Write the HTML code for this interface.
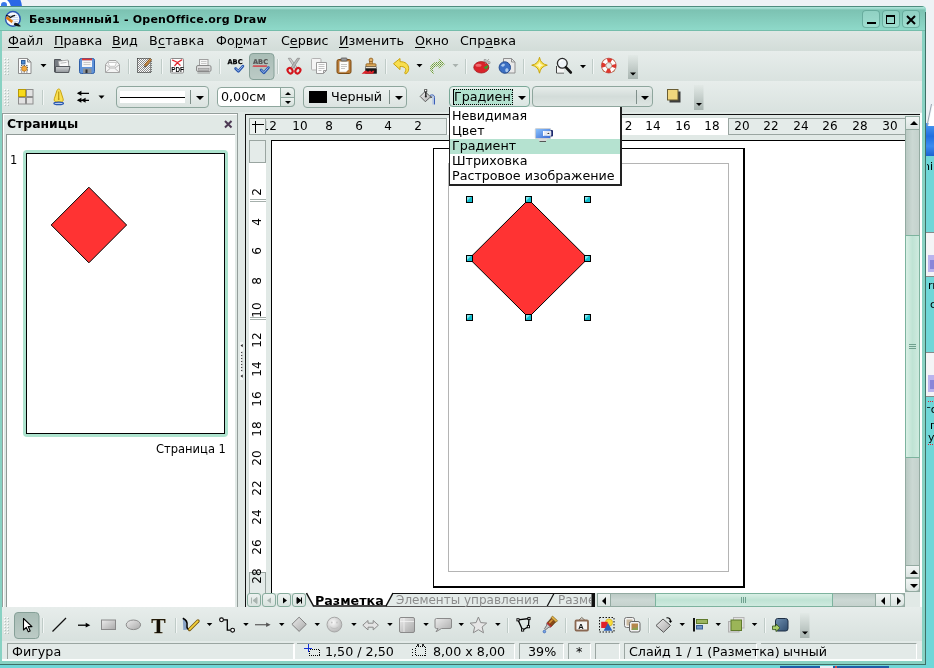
<!DOCTYPE html>
<html lang="ru">
<head>
<meta charset="utf-8">
<title>Безымянный1 - OpenOffice.org Draw</title>
<style>
html,body{margin:0;padding:0;}
body{width:934px;height:668px;overflow:hidden;position:relative;background:#6fd7d8;font-family:"DejaVu Sans","Liberation Sans",sans-serif;font-size:12.7px;color:#000;}
.a{position:absolute;}
svg{will-change:transform;}
.t{position:absolute;white-space:pre;line-height:16px;will-change:transform;}
u{text-decoration:underline;text-underline-offset:2px;text-decoration-thickness:1px;}
#desk-top{left:0;top:0;width:934px;height:7px;background:#eef2f5;}
#desk-right{left:900px;top:0;width:34px;height:123px;background:#eef2f5;}
#win{left:0;top:6px;width:926px;height:659px;background:#88d2c3;border-radius:0 4px 0 0;}
#title{left:0;top:6px;width:925px;height:25px;border-radius:0 4px 0 0;background:linear-gradient(#4f8c7f 0,#4f8c7f 1px,#a9e2d6 1px,#a9e2d6 2px,#7cc2b2 4px,#8ed9c9 24px,#74bdab 24px,#74bdab 25px);}
#content{left:2px;top:31px;width:920px;height:630px;background:#e1e9e6;}
#menubar{left:2px;top:31px;width:920px;height:20px;background:linear-gradient(#dfe7e4,#d2dcd8);}
.tb{left:2px;width:920px;background:linear-gradient(#e7edeb,#d9e2df);}
.wb{top:10px;width:18px;height:18px;border-radius:4px;background:linear-gradient(#8fd0c2,#a0dfd1);box-shadow:inset 0 0 0 1px rgba(70,140,125,.55);}
.cb{box-sizing:border-box;border:1px solid #8ea69d;border-radius:4px;background:linear-gradient(#eef2f1,#dbe3e0);}
.cbs{top:3px;width:1px;height:14px;background:#7f8f8a;}
.arr{width:0;height:0;border-style:solid;border-width:4px 4px 0 4px;border-color:#000 transparent transparent transparent;}
.arrs{width:0;height:0;border-style:solid;}
.rn{font-size:12px;line-height:17px;text-align:center;}
.vr{transform:rotate(-90deg);transform-origin:50% 50%;line-height:16px;}
.sbb{box-sizing:border-box;border:1px solid #93aaa1;background:linear-gradient(#f1f5f4,#dbe4e1);}
.nb{top:593px;width:14px;height:14px;box-sizing:border-box;border:1px solid #86ab9c;border-radius:3px;background:linear-gradient(#edf2f0,#d9e3df);line-height:0;}
.sf{top:643px;height:16px;box-sizing:border-box;border-top:1px solid #9aa5a1;border-left:1px solid #9aa5a1;border-right:1px solid #fff;}
.st{top:644px;line-height:16px;}
</style>
</head>
<body>
<div class="a" id="desk-top"></div>
<div class="a" id="desk-right"></div>
<div class="a" id="win"></div>
<div class="a" id="title"></div>
<div class="a" id="content"></div>
<div class="a" id="menubar"></div>
<div class="a tb" style="top:51px;height:30px"></div>
<div class="a tb" style="top:81px;height:31px"></div>
<div class="a" style="left:0;top:0;width:24px;height:6px;overflow:hidden"><div class="a" style="left:-20px;top:-13px;width:42px;height:42px;border-radius:50%;border:11px solid #2b68e6;background:#fff;box-sizing:border-box"></div><div class="a" style="left:1px;top:2px;width:6px;height:6px;border-radius:50%;background:#3a78ea"></div></div>
<svg class="a" style="left:4px;top:10px" width="18" height="18" viewBox="0 0 18 18"><circle cx="8.900" cy="8.900" r="7.300" fill="#f6f9fd" stroke="#2a57b4" stroke-width="1.500"/><path d="M5 7.500h9M7 9.500h7.500M9 11.500h5M5 5.500h8" stroke="#c9d8ee" stroke-width="1"/><path d="M2 5.300q2.600.2 4.500 2.200q2-1.900 4.600-2.200" fill="none" stroke="#111" stroke-width="1.200"/><path d="M2.300 7.300l6.300 4.800" stroke="#e07a10" stroke-width="2.700"/><path d="M8.400 11.900l2.300 1.700" stroke="#ececec" stroke-width="2.600"/><path d="M10.600 12.800q2.600-.4 6.400 3.400q-4.400.8-7.200-1.400z" fill="#151515"/></svg>
<div class="t" style="left:29px;top:11px;font-size:11px;font-weight:bold;letter-spacing:.2px;line-height:18px">Безымянный1 - OpenOffice.org Draw</div>
<div class="a wb" style="left:862px"><div class="a" style="left:4.500px;top:11.500px;width:9px;height:2px;background:#000"></div></div>
<div class="a wb" style="left:882px"><div class="a" style="left:4px;top:5px;width:9px;height:9px;box-sizing:border-box;border:1px solid #000;border-top-width:2px"></div></div>
<div class="a wb" style="left:902px"><svg class="a" style="left:3.500px;top:4.500px" width="10" height="10" viewBox="0 0 10 10"><path d="M1 1l8 8M9 1l-8 8" stroke="#000" stroke-width="2"/></svg></div>

<div class="t" style="left:8px;top:33px"><u>Ф</u>айл</div>
<div class="t" style="left:54px;top:33px"><u>П</u>равка</div>
<div class="t" style="left:112px;top:33px"><u>В</u>ид</div>
<div class="t" style="left:149px;top:33px;letter-spacing:.25px">В<u>с</u>тавка</div>
<div class="t" style="left:216px;top:33px">Фо<u>р</u>мат</div>
<div class="t" style="left:280.5px;top:33px">С<u>е</u>рвис</div>
<div class="t" style="left:338.5px;top:33px"><u>И</u>зменить</div>
<div class="t" style="left:414.5px;top:33px"><u>О</u>кно</div>
<div class="t" style="left:459.5px;top:33px">Спр<u>а</u>вка</div>

<!--TB1S-->
<svg class="a" style="left:0;top:51px" width="934" height="30" viewBox="0 51 934 30" shape-rendering="auto">
<defs>
<pattern id="chk" width="2" height="2" patternUnits="userSpaceOnUse"><rect width="2" height="2" fill="#fdfdfd"/><rect width="1" height="1" fill="#8a8a8a"/><rect x="1" y="1" width="1" height="1" fill="#8a8a8a"/></pattern>
<pattern id="gdot" width="2" height="2" patternUnits="userSpaceOnUse"><rect width="1" height="1" fill="#6f9a3a"/><rect x="1" y="1" width="1" height="1" fill="#8db457"/></pattern>
<pattern id="grip" x="4" y="58" width="3" height="3" patternUnits="userSpaceOnUse"><rect x="0" y="0" width="1" height="1" fill="#fff"/><rect x="1" y="1" width="1" height="1" fill="#b4c1bd"/></pattern>
<linearGradient id="gfold" x1="0" y1="0" x2="0" y2="1"><stop offset="0" stop-color="#d2d4d6"/><stop offset="1" stop-color="#8f9498"/></linearGradient>
<linearGradient id="gend" x1="0" y1="0" x2="0" y2="1"><stop offset="0" stop-color="#e2e9e6"/><stop offset="1" stop-color="#a9b5b1"/></linearGradient>
<linearGradient id="gpress" x1="0" y1="0" x2="0" y2="1"><stop offset="0" stop-color="#a9bdb6"/><stop offset="1" stop-color="#bccbc6"/></linearGradient>
<g id="sep"><rect x="0" y="59" width="1" height="15" fill="#bfcbc7"/><rect x="1" y="59" width="1" height="15" fill="#f2f6f5"/></g>
<path id="dd" d="M0 0h6l-3 3.200z"/>
</defs>
<rect x="4" y="58" width="6" height="17" fill="url(#grip)"/>
<!-- new doc -->
<path d="M18.500 58.500h9l3.500 3.500v11.500h-12.500z" fill="#fcfcfc" stroke="#8d8d8d"/>
<path d="M27.500 58.500v3.500h3.500z" fill="#dedede" stroke="#8d8d8d" stroke-linejoin="round"/>
<rect x="21.500" y="60.500" width="3.500" height="3.500" fill="#4f8bd0" stroke="#2c5c9c"/>
<circle cx="24.300" cy="68.600" r="2.600" fill="#f3a73c" stroke="#c47a12" stroke-width=".8"/>
<rect x="21" y="65.500" width="6.500" height="6.500" fill="none" stroke="#333" stroke-width=".8" stroke-dasharray="1.300 1.300"/>
<use href="#dd" x="40.500" y="64"/>
<!-- open -->
<path d="M54.500 59.500h6l1.500 1.500h6.500v11h-14z" fill="#777c82" stroke="#52565b"/>
<path d="M58.500 61.300l9.500-1.300 1 7-9.500 1.300z" fill="#fafafa" stroke="#a5a5a5" stroke-width=".8"/>
<path d="M60.500 63.200l6-.8" stroke="#bbb"/>
<path d="M55.500 66.500h14.500l-1.300 6h-13.200z" fill="url(#gfold)" stroke="#55595e"/>
<!-- save -->
<rect x="79.500" y="58.500" width="15" height="15" rx="1.800" fill="#5f93da" stroke="#2f5fa8"/>
<rect x="82" y="58.500" width="10" height="2" fill="#e4332c"/>
<rect x="82" y="60.500" width="10" height="6.500" fill="#f5f5f5"/>
<path d="M83.500 62.500h7M83.500 64.500h7" stroke="#c9c9c9"/>
<rect x="83" y="68.500" width="8.500" height="5" fill="#8c9196"/>
<rect x="85.500" y="69.500" width="2" height="3.500" fill="#2a2e32"/>
<!-- mail -->
<path d="M105.500 64.500l3.500-4h7l3.500 4v8h-14z" fill="#f4f4f4" stroke="#a3a3a3"/>
<path d="M108 62.500h8.500l-1.500 3.800h-5.500z" fill="#fff" stroke="#bdbdbd" stroke-width=".8"/>
<path d="M105.500 72.500l4.500-4M119.500 72.500l-4.500-4M105.500 64.500l4.500 3.500h5l4.500-3.500" fill="none" stroke="#b0b0b0" stroke-width=".9"/>
<use href="#sep" x="128"/>
<!-- edit doc -->
<rect x="137.500" y="58.500" width="13.500" height="14" fill="url(#chk)" stroke="#111" stroke-width="1" stroke-dasharray="1 1"/>
<path d="M150.800 59.200l-5.800 6.600" stroke="#8a4f16" stroke-width="2.800"/>
<path d="M150.800 59.200l-5.800 6.600" stroke="#d19a55" stroke-width="1.200"/>
<path d="M145.200 65.400l-2 2.600 2.900-1.700z" fill="#222"/>
<use href="#sep" x="161"/>
<!-- pdf -->
<rect x="170.500" y="58.500" width="13" height="14.500" rx="1" fill="#fdfdfd" stroke="#8b8b8b"/>
<path d="M172.500 60.200c3 .8 5.500 2.500 7.500 5M181.800 59.800c-2.800 1.200-5.200 3.200-7 5.800" fill="none" stroke="#e3262d" stroke-width="1.300" stroke-linecap="round"/>
<text x="171.200" y="72.200" font-family="Liberation Sans,sans-serif" font-weight="bold" font-size="6.300" letter-spacing="0" fill="#000">PDF</text>
<!-- print -->
<rect x="199.500" y="59.500" width="8.500" height="7" fill="#f6f6f6" stroke="#a0a0a0"/>
<path d="M201 61.500h5.500M201 63.500h5.500" stroke="#c8c8c8"/>
<rect x="196.500" y="65.500" width="14.500" height="6" rx="1.500" fill="#dcdcdc" stroke="#8a8a8a"/>
<rect x="198.500" y="68.500" width="10.500" height="2" fill="#bcbcbc" stroke="#8f8f8f" stroke-width=".6"/>
<path d="M197.500 72.500h12.500v1h-12.500z" fill="#9a9a9a"/>
<use href="#sep" x="219"/>
<!-- spellcheck -->
<text x="227.500" y="63.800" font-family="DejaVu Sans,sans-serif" font-weight="bold" font-size="6.600" fill="#000" stroke="#000" stroke-width=".25">ABC</text>
<path d="M235.600 68.500l2.800 2.900 4.500-5.300" fill="none" stroke="#2856ae" stroke-width="2.700" stroke-linecap="round" stroke-linejoin="round"/>
<path d="M235.900 68.600l2.500 2.400 4.200-4.800" fill="none" stroke="#a9c6f4" stroke-width=".9" stroke-linecap="round" stroke-linejoin="round"/>
<!-- autospell pressed -->
<rect x="249.500" y="53.500" width="24.500" height="26" rx="3.500" fill="url(#gpress)" stroke="#86a098"/>
<text x="253" y="64.300" font-family="DejaVu Sans,sans-serif" font-weight="bold" font-size="6.600" fill="#555" stroke="#555" stroke-width=".2">ABC</text>
<path d="M253 66.800l1-1.400 1 1.400 1-1.400 1 1.400 1-1.400 1 1.400 1-1.400 1 1.400 1-1.400 1 1.400 1-1.400 1 1.400 1-1.400 1 1.400" fill="none" stroke="#e01b24" stroke-width="1"/>
<path d="M261.100 70l2.800 2.900 4.500-5.300" fill="none" stroke="#2856ae" stroke-width="2.700" stroke-linecap="round" stroke-linejoin="round"/>
<path d="M261.400 70.100l2.500 2.400 4.200-4.800" fill="none" stroke="#a9c6f4" stroke-width=".9" stroke-linecap="round" stroke-linejoin="round"/>
<use href="#sep" x="277"/>
<!-- cut -->
<path d="M288.300 58.300h2.400l6.600 9.600-1.800 1.300z" fill="#cfcfcf" stroke="#858585" stroke-width=".7" stroke-linejoin="round"/>
<path d="M299.700 58.300h-2.400l-6.600 9.600 1.800 1.300z" fill="#b9b9b9" stroke="#858585" stroke-width=".7" stroke-linejoin="round"/>
<ellipse cx="290.100" cy="70.700" rx="2.300" ry="2.900" fill="none" stroke="#d3141b" stroke-width="2.100" transform="rotate(-35 290.100 70.700)"/>
<ellipse cx="297.900" cy="70.700" rx="2.300" ry="2.900" fill="none" stroke="#d3141b" stroke-width="2.100" transform="rotate(35 297.900 70.700)"/>
<!-- copy -->
<rect x="311.500" y="58.500" width="9.500" height="11.500" rx="1" fill="#f4f4f4" stroke="#b3b3b3"/>
<path d="M316.500 62.500h10v8l-3 3h-7z" fill="#fdfdfd" stroke="#9b9b9b"/>
<path d="M326.500 70.500h-3v3z" fill="#e2e2e2" stroke="#9b9b9b" stroke-linejoin="round"/>
<path d="M318.500 64.500h6M318.500 66.500h6M318.500 68.500h6M318.500 70.500h3" stroke="#c2c2c2"/>
<!-- paste -->
<rect x="337" y="59.500" width="14" height="14" rx="1.800" fill="#b97b36" stroke="#7c4c14"/>
<path d="M339.500 61.500h9v8l-2.500 2.500h-6.500z" fill="#fdfdfd" stroke="#c9c0b0" stroke-width=".6"/>
<path d="M341 64.500h6M341 66.500h6M341 68.500h4" stroke="#c6c6c6"/>
<rect x="341" y="58" width="6" height="3" rx=".8" fill="#9a9a9a" stroke="#555" stroke-width=".8"/>
<!-- paintbrush -->
<circle cx="371" cy="60" r="1.900" fill="#e3b268" stroke="#8b5a1c" stroke-width=".8"/>
<rect x="369.500" y="61.500" width="3" height="3" fill="#d9a557" stroke="#8b5a1c" stroke-width=".6"/>
<rect x="366" y="63.800" width="10" height="3" rx=".8" fill="#dcaa5c" stroke="#8b5a1c" stroke-width=".8"/>
<rect x="365.500" y="66.800" width="11" height="1.700" fill="#efe9dc" stroke="#333" stroke-width=".5"/>
<rect x="365.300" y="68.500" width="11.500" height="5.200" fill="#161616"/>
<path d="M361.500 73.700h11.500l1.500-3h-2l-1 1.400-1-1.400h-1.500l-1 1.400-1-1.400h-2z" fill="#dc2229"/>
<use href="#sep" x="385"/>
<!-- undo -->
<path d="M393.500 63.700l6.500-5.200v3.200c5.200-.2 8.700 2.600 8.700 7 0 2.200-1 3.800-2.700 5-1.400.2-1.600-.6-.8-1.800 1.800-3.400-.6-5.600-5.200-5.400v3.100z" fill="#f8de4e" stroke="#c9a20c" stroke-width="1" stroke-linejoin="round"/>
<use href="#dd" x="416.500" y="64"/>
<!-- redo -->
<path d="M445.300 63.700l-6.500-5.200v3.200c-5.200-.2-8.700 2.600-8.700 7 0 2.200 1 3.800 2.700 5 1.400.2 1.600-.6.800-1.800-1.800-3.400.6-5.600 5.200-5.400v3.100z" fill="url(#gdot)"/>
<use href="#dd" x="452.500" y="64" fill="#a9b1ae"/>
<use href="#sep" x="465"/>
<!-- tomato -->
<ellipse cx="481.300" cy="67.300" rx="7.500" ry="5.700" fill="#d9232a" stroke="#a3151b" stroke-width=".8"/>
<ellipse cx="478.500" cy="65.300" rx="3" ry="1.500" fill="#ef6a6e"/>
<path d="M483.500 67.500l4-2.500 1 2-2.500 2.500z" fill="#3f9a2c"/>
<text x="483.500" y="64" font-family="Liberation Sans,sans-serif" font-weight="bold" font-size="8" fill="#8f8f8f">%</text>
<!-- globe doc -->
<path d="M503.500 58.500h8l3.500 3.500v11h-11.500z" fill="#e9e9e9" stroke="#8f8f8f"/>
<path d="M511.500 58.500v3.500h3.500" fill="none" stroke="#8f8f8f"/>
<circle cx="504.800" cy="67.500" r="5.700" fill="#3b6fc4" stroke="#244b8f"/>
<path d="M501 65.500c1-1.500 2.500-2 3.500-1.500s0 2-1 2.500-2 0-2.500-1zM506 68.500c1-.5 2.500 0 2.500 1.500s-1.500 2.500-2.500 2-1-3 0-3.500z" fill="#a9c8ee"/>
<use href="#sep" x="523"/>
<!-- star -->
<path d="M539.500 57.300Q540.600 64 547.300 65.200Q540.600 66.400 539.500 73.200Q538.400 66.400 531.700 65.200Q538.400 64 539.500 57.300z" fill="#fae452" stroke="#c6a30f" stroke-width="1" stroke-linejoin="round"/>
<path d="M539.500 61.500Q540 64.700 543.500 65.200Q540 65.700 539.500 69Q539 65.700 535.500 65.200Q539 64.700 539.500 61.500z" fill="#fdf6bf"/>
<!-- zoom -->
<path d="M556.500 66v7h7.500" fill="none" stroke="#444" stroke-width="1"/>
<path d="M557 66.500h7v6h-7z" fill="#f5f5f5"/>
<circle cx="562.300" cy="63.300" r="4.900" fill="#eef3f8" stroke="#2a2a2a" stroke-width="1.300"/>
<path d="M559.500 62.500c.4-1.500 1.700-2.400 3.200-2.400" fill="none" stroke="#fff" stroke-width="1.200"/>
<path d="M566 67.300l4.800 5.200" stroke="#151515" stroke-width="2.600" stroke-linecap="round"/>
<use href="#dd" x="580" y="65"/>
<use href="#sep" x="592"/>
<!-- help -->
<rect x="602.500" y="59.500" width="12.500" height="12.500" rx="2" fill="#b08338" opacity=".75"/>
<circle cx="608.800" cy="65.600" r="5.200" fill="none" stroke="#fdfdfd" stroke-width="4.200"/>
<circle cx="608.800" cy="65.600" r="5.200" fill="none" stroke="#e0362c" stroke-width="4.200" stroke-dasharray="4.080 4.080" stroke-dashoffset="2.040"/>
<circle cx="608.800" cy="65.600" r="7.400" fill="none" stroke="#b53a30" stroke-width=".7"/>
<circle cx="608.800" cy="65.600" r="3" fill="#e3ebe8" stroke="#b9756c" stroke-width=".7"/>
<!-- end -->
<rect x="628" y="55" width="10" height="24" fill="url(#gend)"/>
<path d="M630 72.500h6l-3 3z"/>
</svg>
<!--TB1E-->
<!--TB2S-->
<svg class="a" style="left:0;top:81px" width="934" height="31" viewBox="0 81 934 31">
<defs>
<pattern id="grip2" x="4" y="89" width="3" height="3" patternUnits="userSpaceOnUse"><rect x="0" y="0" width="1" height="1" fill="#fff"/><rect x="1" y="1" width="1" height="1" fill="#b4c1bd"/></pattern>
<g id="sep2"><rect x="0" y="90" width="1" height="15" fill="#bfcbc7"/><rect x="1" y="90" width="1" height="15" fill="#f2f6f5"/></g>
</defs>
<rect x="4" y="89" width="6" height="17" fill="url(#grip2)"/>
<!-- grid -->
<rect x="18.500" y="89.500" width="7" height="7" fill="#f8da1a" stroke="#b89a08"/>
<rect x="26.500" y="89.500" width="6.500" height="7" fill="#e2e2e2" stroke="#8e8e8e"/>
<rect x="18.500" y="97.500" width="7" height="6.500" fill="#e2e2e2" stroke="#8e8e8e"/>
<rect x="26.500" y="97.500" width="6.500" height="6.500" fill="#e2e2e2" stroke="#8e8e8e"/>
<use href="#sep2" x="42"/>
<!-- nib -->
<path d="M58.700 89c-.9 0-1.500.7-1.900 2l-2.500 7.800c-.5 1.700.3 2.900 1.700 3.200h5.400c1.400-.3 2.200-1.500 1.700-3.200l-2.500-7.800c-.4-1.300-1-2-1.900-2z" fill="#f9e054" stroke="#c9a30e" stroke-width="1"/>
<path d="M58.700 91.500v6.500" stroke="#b8930c" stroke-width="1.100"/>
<circle cx="58.700" cy="99" r=".9" fill="#b8930c"/>
<ellipse cx="58.700" cy="103.400" rx="4.800" ry="1.200" fill="#b9cdf0" stroke="#2a58b0" stroke-width="1.200"/>
<!-- arrows -->
<path d="M78 93.300h11M78 100.300h11" stroke="#000" stroke-width="1.200"/>
<path d="M76.800 93.300l4.600-2.500v5zM76.800 100.300l4.600-2.500v5zM81 100.300l4.600-2.500v5z" fill="#000"/>
<path d="M98.500 95.500h6l-3 3.200z"/>
<!-- bucket -->
<defs><linearGradient id="gbk" x1="0" y1="0" x2="1" y2="1"><stop offset="0" stop-color="#f6f6f6"/><stop offset="1" stop-color="#a9a9a9"/></linearGradient></defs>
<path d="M429.800 95.500c2.500-1.300 4.700-.6 4.700 1.800v7.200" fill="none" stroke="#3b5fb8" stroke-width="1"/>
<path d="M430.500 96.600c1.600-.7 2.600-.2 2.600 1.400v6.500" fill="none" stroke="#8fa9e2" stroke-width=".9"/>
<path d="M420.200 96.400l4.700-4.700 4.900 4.300 2.200 1.400-2.300.3-4.400 4-5.100-5.300z" fill="url(#gbk)" stroke="#555" stroke-width=".9" stroke-linejoin="round"/>
<path d="M425.800 91.500v5.300" stroke="#222" stroke-width="1.400"/>
<rect x="424.200" y="89.200" width="3" height="3" fill="#3a3a3a"/>
<circle cx="425.700" cy="90.600" r=".8" fill="#fff"/>
<circle cx="425.800" cy="96.600" r="1" fill="#222"/>
<!-- shadow icon -->
<rect x="669.500" y="91.500" width="11" height="11" fill="#3d3d3d"/>
<rect x="667.500" y="89.500" width="10.500" height="10.500" fill="#f1d67d" stroke="#6a5d33"/>
<!-- end -->
<rect x="694" y="85" width="9.500" height="25" fill="url(#gend)"/>
<path d="M696 103h6l-3 3z"/>
</svg>
<div class="a cb" style="left:116px;top:86px;width:93px;height:22px"><div class="a" style="left:3px;top:4px;width:65px;height:12px;background:#fff"></div><div class="a" style="left:3px;top:10px;width:65px;height:1px;background:#000"></div><div class="a cbs" style="left:73px"></div><div class="a arr" style="left:79px;top:9px"></div></div>
<div class="a cb" style="left:217px;top:87px;width:78px;height:20px;background:#fff"><div class="t" style="left:3.300px;top:1px">0,00см</div><div class="a" style="left:62px;top:-1px;width:15px;height:20px;box-sizing:border-box;background:linear-gradient(#eef3f1,#dbe4e0 48%,#eef3f1 52%,#d6e0dc);border:1px solid #8ea69d;border-radius:0 4px 4px 0"></div><div class="a" style="left:63px;top:8.500px;width:13px;height:1px;background:#8ea69d"></div><div class="a arrs" style="left:66.500px;top:3.500px;border-width:0 3.500px 3.500px 3.500px;border-color:transparent transparent #000 transparent"></div><div class="a arrs" style="left:66.500px;top:13px;border-width:3.500px 3.500px 0 3.500px;border-color:#000 transparent transparent transparent"></div></div>
<div class="a cb" style="left:303px;top:86px;width:104px;height:22px"><div class="a" style="left:5px;top:4px;width:18px;height:12px;background:#000"></div><div class="t" style="left:27px;top:2px">Черный</div><div class="a cbs" style="left:85px"></div><div class="a arr" style="left:91px;top:9px"></div></div>
<div class="a cb" style="left:449px;top:86px;width:81px;height:21px;border-color:#7aa897;background:linear-gradient(#eaf1ee,#dbe6e2)"><div class="a" style="left:3px;top:2px;width:60px;height:16px;background:#b3e2cf;outline:1px dotted #000;outline-offset:-1px;overflow:hidden"><div class="t" style="left:1px;top:0">Градиент</div></div><div class="a" style="left:3px;top:3px;width:1px;height:14px;background:#000"></div><div class="a arr" style="left:68px;top:9px"></div></div>
<div class="a cb" style="left:532px;top:86px;width:121px;height:21px;background:linear-gradient(#e6ecea,#d3dcd9 50%,#dde5e2)"><div class="a cbs" style="left:103px"></div><div class="a arr" style="left:108px;top:9px"></div></div>
<!--TB2E-->
<!--PANELS-->
<div class="a" style="left:2px;top:112px;width:236px;height:495px;background:#e1e9e6"></div>
<div class="a" style="left:2px;top:113px;width:236px;height:494px;box-sizing:border-box;border:1px solid #949e9b;border-bottom:none;box-shadow:inset 1px 1px 0 #fff"></div>
<div class="t" style="left:7px;top:116px;font-size:12.400px;font-weight:bold;line-height:16px">Страницы</div>
<svg class="a" style="left:224px;top:120px" width="9" height="9" viewBox="0 0 9 9"><path d="M1 1l6.500 6.500M7.500 1l-6.500 6.500" stroke="#4d3a54" stroke-width="2"/></svg>
<div class="a" style="left:6px;top:134px;width:229px;height:472.500px;box-sizing:border-box;background:#fff;border:1px solid #8f9996;border-right:none;border-bottom:none"></div>
<div class="t" style="left:9.700px;top:152.500px;font-size:11.500px;line-height:14px">1</div>
<div class="a" style="left:23px;top:150px;width:205px;height:287px;border-radius:4px;background:#ade3ce"></div>
<div class="a" style="left:26px;top:153px;width:199px;height:281px;box-sizing:border-box;border:1px solid #000;background:#fff"></div>
<svg class="a" style="left:40px;top:180px" width="100" height="90" viewBox="40 180 100 90"><path d="M88.900 187.200l37.700 37.800-37.700 37.800-37.700-37.800z" fill="#ff3333" stroke="#000" stroke-width="1"/></svg>
<div class="t" style="left:156px;top:442px;font-size:11.500px;line-height:14px">Страница 1</div>
<div class="a" style="left:239px;top:112px;width:6px;height:495px;background:#e1e9e6"></div>
<div class="a" style="left:240px;top:342px;width:2.500px;height:38px;background:#f4f7f6"></div><svg class="a" style="left:239px;top:340px" width="6" height="42" viewBox="0 0 6 42"><path d="M3.700 4l-2.200 1.600 2.200 1.600zM3.700 34.500l-2.200 1.600 2.200 1.600z" fill="#222"/><path d="M1.800 12.500l1.500-1v2zM1.800 15.500l1.500-1v2zM1.800 18.500l1.500-1v2zM1.800 21.500l1.500-1v2zM1.800 24.500l1.500-1v2zM1.800 27.500l1.500-1v2zM1.800 30.500l1.500-1v2z" fill="#222"/></svg>
<!--PANELE-->
<!--WORKS-->
<div class="a" style="left:245px;top:113px;width:677px;height:494px;background:#e1e9e6"></div>
<div class="a" style="left:245px;top:113.500px;width:676px;height:1.500px;background:#111"></div>
<div class="a" style="left:245px;top:113.500px;width:1.300px;height:494px;background:#111"></div>
<div class="a" style="left:249px;top:118px;width:17px;height:17px;box-sizing:border-box;border:1px solid #9aa5a1;background:#edf2f0"></div>
<div class="a" style="left:252px;top:124px;width:12px;height:1px;background:#000"></div><div class="a" style="left:255px;top:121px;width:1px;height:12px;background:#000"></div>
<div class="a" style="left:266px;top:118px;width:639px;height:17px;background:#fff"></div>
<div class="a" style="left:265px;top:118px;width:182px;height:17px;box-sizing:border-box;border:1px solid #9aa5a1;background:#e4ebe9"></div>
<div class="a" style="left:728px;top:118px;width:178px;height:17px;box-sizing:border-box;border:1px solid #9aa5a1;background:#e4ebe9"></div>
<div class="t rn" style="left:284.8px;top:118px;width:30px">10</div><div class="t rn" style="left:314.2px;top:118px;width:30px">8</div><div class="t rn" style="left:343.8px;top:118px;width:30px">6</div><div class="t rn" style="left:373.3px;top:118px;width:30px">4</div><div class="t rn" style="left:402.9px;top:118px;width:30px">2</div><div class="t rn" style="left:638px;top:118px;width:30px">14</div><div class="t rn" style="left:667.6px;top:118px;width:30px">16</div><div class="t rn" style="left:697.2px;top:118px;width:30px">18</div><div class="t rn" style="left:726.8px;top:118px;width:30px">20</div><div class="t rn" style="left:756.3px;top:118px;width:30px">22</div><div class="t rn" style="left:785.9px;top:118px;width:30px">24</div><div class="t rn" style="left:815.4px;top:118px;width:30px">26</div><div class="t rn" style="left:845px;top:118px;width:30px">28</div><div class="t rn" style="left:874.5px;top:118px;width:30px">30</div><div class="t rn" style="left:266px;top:118px;width:12px;text-align:left;overflow:hidden"><span style="margin-left:-4.500px">12</span></div><div class="t rn" style="left:624.500px;top:118px;width:9px;text-align:left;overflow:hidden"><span style="margin-left:-7.800px">12</span></div>
<div class="a" style="left:249px;top:140px;width:17px;height:453px;background:#fff"></div>
<div class="a" style="left:249px;top:140px;width:17px;height:23px;box-sizing:border-box;border:1px solid #9aa5a1;background:#e4ebe9"></div>
<div class="a" style="left:249px;top:572px;width:17px;height:21px;box-sizing:border-box;border:1px solid #9aa5a1;border-bottom:none;background:#e4ebe9"></div>
<div class="a" style="left:250px;top:199px;width:16px;height:1px;background:#a6b0ac"></div><div class="a" style="left:250px;top:201px;width:16px;height:1px;background:#a6b0ac"></div><div class="a" style="left:250px;top:317px;width:16px;height:1px;background:#a6b0ac"></div><div class="a" style="left:250px;top:319px;width:16px;height:1px;background:#a6b0ac"></div>
<div class="t rn vr" style="left:241.7px;top:184.1px;width:30px">2</div><div class="t rn vr" style="left:241.7px;top:213.6px;width:30px">4</div><div class="t rn vr" style="left:241.7px;top:243.2px;width:30px">6</div><div class="t rn vr" style="left:241.7px;top:272.7px;width:30px">8</div><div class="t rn vr" style="left:241.7px;top:302.3px;width:30px">10</div><div class="t rn vr" style="left:241.7px;top:331.9px;width:30px">12</div><div class="t rn vr" style="left:241.7px;top:361.4px;width:30px">14</div><div class="t rn vr" style="left:241.7px;top:391.0px;width:30px">16</div><div class="t rn vr" style="left:241.7px;top:420.5px;width:30px">18</div><div class="t rn vr" style="left:241.7px;top:450.1px;width:30px">20</div><div class="t rn vr" style="left:241.7px;top:479.7px;width:30px">22</div><div class="t rn vr" style="left:241.7px;top:509.2px;width:30px">24</div><div class="t rn vr" style="left:241.7px;top:538.8px;width:30px">26</div><div class="t rn vr" style="left:241.7px;top:568.3px;width:30px">28</div>
<div class="a" style="left:271px;top:140px;width:634px;height:453px;background:#fff;box-sizing:border-box;border-left:1px solid #000;border-top:1px solid #000"></div>
<div class="a" style="left:433px;top:148px;width:312px;height:440px;box-sizing:border-box;background:#fff;border:1px solid #000;border-right-width:2px;border-bottom-width:2px"></div>
<div class="a" style="left:448px;top:163px;width:281px;height:409px;box-sizing:border-box;border:1px solid #b4b4b4"></div>
<svg class="a" style="left:460px;top:190px" width="140" height="140" viewBox="460 190 140 140"><defs><g id="hd"><rect x="-3" y="-3" width="7" height="7" fill="#000"/><rect x="-2" y="-2" width="5" height="5" fill="#12bccc"/><path d="M-2 -2h4l-4 4z" fill="#7fe6ee"/></g></defs>
<path d="M528.500 199.500l59.300 59-59.300 59-59.300-59z" fill="#ff3333" stroke="#000" stroke-width="1"/>
<use href="#hd" x="469" y="199"/><use href="#hd" x="528" y="199"/><use href="#hd" x="587" y="199"/>
<use href="#hd" x="469" y="258"/><use href="#hd" x="587" y="258"/>
<use href="#hd" x="469" y="317"/><use href="#hd" x="528" y="317"/><use href="#hd" x="587" y="317"/>
</svg>
<!--WORKE-->
<!--LISTS-->
<div class="a" style="left:449px;top:107px;width:173px;height:79px;box-sizing:border-box;background:#fff;border:1px solid #222;border-top:none;border-right-width:2px;border-bottom-width:2px"></div>
<div class="a" style="left:450px;top:139px;width:170px;height:15px;background:#b5e2d0"></div>
<div class="t" style="left:451.500px;top:108px;line-height:15px">Невидимая</div>
<div class="t" style="left:451.500px;top:123px;line-height:15px">Цвет</div>
<div class="t" style="left:451.500px;top:138px;line-height:15px">Градиент</div>
<div class="t" style="left:451.500px;top:153px;line-height:15px">Штриховка</div>
<div class="t" style="left:451.500px;top:168px;line-height:15px">Растровое изображение</div>
<svg class="a" style="left:534px;top:127px" width="20" height="16" viewBox="534 127 20 16"><defs><linearGradient id="gmon" x1="0" y1="0" x2="1" y2="1"><stop offset="0" stop-color="#8ec6ff"/><stop offset="1" stop-color="#3767d2"/></linearGradient></defs><rect x="535.300" y="128.500" width="15.400" height="10" rx=".8" fill="url(#gmon)" stroke="#d0d0d0" stroke-width=".9"/><path d="M538.300 139h9l-1.500 2.700h-6z" fill="#d9d9d9"/><path d="M539.500 141.500h6.500" stroke="#333" stroke-width=".8"/><path d="M550.500 130h1.500q1 0 1 1v4.500q0 1-1 1h-1.500z" fill="#1e2a6e"/><rect x="543" y="131" width="8.300" height="4.800" rx=".8" fill="#e9ecf6"/><rect x="543" y="131" width="1" height="4.800" fill="#fff"/><circle cx="548.300" cy="133.400" r="2" fill="#f4f6fb" stroke="#c9cfe0" stroke-width=".4"/><ellipse cx="548.400" cy="133.400" rx="1" ry=".6" fill="#333"/></svg>
<!--LISTE-->
<!--SCROLLS-->
<div class="a" style="left:905px;top:116px;width:15px;height:476px;background:linear-gradient(90deg,#b7c7c1,#cbd8d3 50%,#c3d1cc);box-shadow:inset 0 0 0 1px #93aaa1"></div>
<div class="a sbb" style="left:905px;top:116px;width:15px;height:14px"><div class="a arrs" style="left:3.500px;top:4px;border-width:0 4px 4.500px 4px;border-color:transparent transparent #000 transparent"></div></div>
<div class="a" style="left:905px;top:235px;width:15px;height:223px;box-sizing:border-box;border:1px solid #7db39e;background:linear-gradient(90deg,#d9efe5,#bfe3d4 50%,#cfeadf)"></div>
<div class="a" style="left:909px;top:344px;width:7px;height:1px;background:#6fa08e;box-shadow:0 2px 0 #6fa08e,0 4px 0 #6fa08e"></div>
<div class="a sbb" style="left:905px;top:565px;width:15px;height:13px"><div class="a arrs" style="left:3.500px;top:4px;border-width:0 4px 4.500px 4px;border-color:transparent transparent #000 transparent"></div></div>
<div class="a sbb" style="left:905px;top:578px;width:15px;height:14px;border-radius:0 0 4px 4px"><div class="a arrs" style="left:3.500px;top:5px;border-width:4.500px 4px 0 4px;border-color:#000 transparent transparent transparent"></div></div>
<div class="a" style="left:920px;top:113px;width:2px;height:494px;background:#fff"></div>
<!-- hscroll -->
<div class="a" style="left:597px;top:593px;width:308px;height:14px;background:linear-gradient(#b9c8c3,#ccd8d4 50%,#c4d1cc);box-shadow:inset 0 0 0 1px #93aaa1"></div>
<div class="a sbb" style="left:597px;top:593px;width:14px;height:14px"><div class="a arrs" style="left:4px;top:3px;border-width:4px 4.500px 4px 0;border-color:transparent #000 transparent transparent"></div></div>
<div class="a" style="left:655px;top:593px;width:178px;height:14px;box-sizing:border-box;border:1px solid #7db39e;background:linear-gradient(#d9efe5,#bfe3d4 50%,#cfeadf)"></div>
<div class="a" style="left:741px;top:597px;width:1px;height:6px;background:#6fa08e;box-shadow:2px 0 0 #6fa08e,4px 0 0 #6fa08e"></div>
<div class="a sbb" style="left:875px;top:593px;width:16px;height:14px"><div class="a arrs" style="left:5px;top:3px;border-width:4px 4.500px 4px 0;border-color:transparent #000 transparent transparent"></div></div>
<div class="a sbb" style="left:890px;top:593px;width:15px;height:14px;border-radius:0 4px 4px 0"><div class="a arrs" style="left:5.500px;top:3px;border-width:4px 0 4px 4.500px;border-color:transparent transparent transparent #000"></div></div>
<!-- tabs -->
<div class="a" style="left:246.500px;top:593px;width:350px;height:14px;background:#e1e9e6"></div>
<div class="a nb" style="left:247px"><svg width="13" height="13" viewBox="0 0 13 13"><path d="M3.500 3.500v6M9 3.500v6l-4-3z" fill="#a9b4b0" stroke="#a9b4b0" stroke-width="1"/></svg></div>
<div class="a nb" style="left:262px"><svg width="13" height="13" viewBox="0 0 13 13"><path d="M8 3.500v6l-4-3z" fill="#a9b4b0"/></svg></div>
<div class="a nb" style="left:277px"><svg width="13" height="13" viewBox="0 0 13 13"><path d="M5 3.500v6l4-3z" fill="#000"/></svg></div>
<div class="a nb" style="left:292px"><svg width="13" height="13" viewBox="0 0 13 13"><path d="M4 3.500v6l4-3zM8.500 3.500v6" fill="#000" stroke="#000" stroke-width="1"/></svg></div>
<svg class="a" style="left:306px;top:592px" width="292" height="16" viewBox="306 592 292 16">
<path d="M386 606.500l7-13h199v13z" fill="#e4ebe9"/>
<path d="M393 593.500h199" stroke="#111" stroke-width="1"/>
<path d="M547 606.500l7-13" stroke="#111" stroke-width="1.200"/>
<path d="M386 606.500h206" stroke="#555" stroke-width="1"/>
<path d="M306.500 593l7 13.500h72.500l7-13.500z" fill="#fff"/>
<path d="M306.500 593l7 13h72.500l7-13" fill="none" stroke="#111" stroke-width="1.500"/>
<rect x="591.500" y="593" width="3.500" height="14" fill="#111"/>
</svg>
<div class="t" style="left:314.500px;top:593px;font-size:12.700px;font-weight:bold;line-height:15px">Разметка</div>
<div class="t" style="left:396px;top:593px;font-size:12px;line-height:15px;color:#8c8c8c">Элементы управления</div>
<div class="t" style="left:558px;top:593px;font-size:12px;line-height:15px;color:#8c8c8c;width:33px;overflow:hidden">Разметка</div>
<!--SCROLLE-->
<div class="a" style="left:2px;top:606.500px;width:243px;height:1px;background:#a9b3af"></div>
<!--BOTS-->
<div class="a" style="left:2px;top:607px;width:920px;height:34px;background:linear-gradient(#e7edeb,#d8e1de)"></div>
<div class="a" style="left:2px;top:641px;width:920px;height:20px;background:#e3eae8"></div>
<div class="a" style="left:2px;top:659px;width:920px;height:2px;background:#fbfdfc"></div>
<svg class="a" style="left:0;top:607px" width="934" height="34" viewBox="0 607 934 34">
<defs>
<pattern id="grip3" x="4" y="617" width="3" height="3" patternUnits="userSpaceOnUse"><rect x="0" y="0" width="1" height="1" fill="#fff"/><rect x="1" y="1" width="1" height="1" fill="#b4c1bd"/></pattern>
<g id="sep3"><rect x="0" y="618" width="1" height="15" fill="#bfcbc7"/><rect x="1" y="618" width="1" height="15" fill="#f2f6f5"/></g>
<path id="dd3" d="M0 0h5.500l-2.750 3z"/>
<linearGradient id="gg" x1="0" y1="0" x2="1" y2="1"><stop offset="0" stop-color="#ececec"/><stop offset="1" stop-color="#a9a9a9"/></linearGradient>
<radialGradient id="gs" cx=".4" cy=".35" r=".7"><stop offset="0" stop-color="#fafafa"/><stop offset="1" stop-color="#b4b4b4"/></radialGradient>
<linearGradient id="gbl" x1="0" y1="0" x2="1" y2="1"><stop offset="0" stop-color="#6f8fb0"/><stop offset="1" stop-color="#2f4d6e"/></linearGradient>
</defs>
<rect x="4" y="617" width="6" height="17" fill="url(#grip3)"/>
<rect x="14.500" y="612.500" width="24.500" height="26" rx="3.500" fill="url(#gpress)" stroke="#86a098"/>
<path d="M23.500 618.500v11.500l2.800-2.600 2 4.400 1.900-.9-2-4.300h3.800z" fill="#fff" stroke="#000" stroke-width="1.100" stroke-linejoin="round"/>
<use href="#sep3" x="42"/>
<path d="M52.500 631.500l13.500-13.500" stroke="#111" stroke-width="1.300"/>
<path d="M78 625.200h9" stroke="#000" stroke-width="1.300"/><path d="M90.300 625.200l-4.600-2.400v4.800z"/>
<rect x="101.500" y="620" width="14" height="9.500" fill="url(#gg)" stroke="#8a8a8a"/>
<ellipse cx="133.400" cy="624.800" rx="7.200" ry="4.800" fill="url(#gg)" stroke="#8a8a8a"/>
<text x="151.300" y="632.800" font-family="Liberation Serif,DejaVu Serif,serif" font-weight="bold" font-size="21.500" fill="#120d05" stroke="#5a4518" stroke-width=".25">T</text>
<use href="#sep3" x="175"/>
<!-- curve -->
<path d="M182.800 618.500c2.500 1 4.500 4 4 7.500-.3 2 .5 3.500 2.500 3.500l-6 .5z" fill="#8aa4c8"/>
<path d="M182.800 618.300c2.800 1.200 4.800 4.200 4.200 7.700-.3 2.300 1 3.700 3 3" fill="none" stroke="#000" stroke-width="1.500"/>
<path d="M189.500 629.500l8.500-8.500" stroke="#7a5a10" stroke-width="3.400" stroke-linecap="round"/>
<path d="M189.800 629.200l8-8" stroke="#f5d23c" stroke-width="1.800" stroke-linecap="round"/>
<use href="#dd3" x="206.800" y="623"/>
<!-- connector -->
<path d="M223.300 619.800h4v10.400h3.500" fill="none" stroke="#000" stroke-width="1.300"/>
<circle cx="221.500" cy="619.800" r="1.900" fill="#fff" stroke="#000" stroke-width="1.100"/>
<circle cx="232.600" cy="630.200" r="1.900" fill="#fff" stroke="#000" stroke-width="1.100"/>
<use href="#dd3" x="243.200" y="623"/>
<path d="M255 624.700h12" stroke="#666" stroke-width="1.300"/><path d="M270.600 624.700l-4.500-2.200v4.400z" fill="#555"/>
<use href="#dd3" x="279" y="623"/>
<path d="M299.100 617.200l7.200 7.100-7.200 7.100-7.200-7.100z" fill="url(#gg)" stroke="#7e7e7e"/>
<use href="#dd3" x="314.500" y="623"/>
<circle cx="334.400" cy="624.600" r="7.400" fill="url(#gs)" stroke="#a5a5a5"/>
<path d="M330.500 627c1.500 2 6 2 7.800 0" fill="none" stroke="#bdbdbd" stroke-width="1"/>
<circle cx="331.800" cy="622.500" r=".9" fill="#c4c4c4"/><circle cx="337" cy="622.500" r=".9" fill="#c4c4c4"/>
<use href="#dd3" x="351.200" y="623"/>
<path d="M362.800 625.200l5.200-4.700v2.700h5.200v-2.700l5.200 4.700-5.200 4.700v-2.700h-5.200v2.700z" fill="#e4e4e4" stroke="#8a8a8a" stroke-linejoin="round"/>
<use href="#dd3" x="387.200" y="623"/>
<rect x="399.500" y="617.500" width="15" height="15" rx="1.500" fill="url(#gg)" stroke="#8a8a8a"/>
<path d="M404 618v14M400 621.500h14" stroke="#f4f4f4" stroke-width=".8"/>
<use href="#dd3" x="423.300" y="623"/>
<path d="M436.500 618.500h13.500q1.500 0 1.500 1.500v7q0 1.500-1.500 1.500h-8.500l-5.500 3.300 2-3.300h-1.500q-1.500 0-1.500-1.500v-7q0-1.500 1.500-1.500z" fill="url(#gg)" stroke="#8a8a8a"/>
<use href="#dd3" x="458.500" y="623"/>
<path d="M478.400 617l2.300 5.600 6 .5-4.600 3.900 1.400 5.800-5.100-3.100-5.100 3.100 1.400-5.800-4.600-3.900 6-.5z" fill="#e6e6e6" stroke="#8a8a8a" stroke-linejoin="round"/>
<use href="#dd3" x="495.100" y="623"/>
<use href="#sep3" x="507"/>
<!-- poly edit -->
<path d="M518 619.800l11-1.300-.6 8.200-5.800 3.300z" fill="none" stroke="#000" stroke-width="1.300"/>
<g fill="#fff" stroke="#000" stroke-width=".9"><rect x="516.900" y="618.700" width="2.200" height="2.200"/><rect x="527.900" y="617.400" width="2.200" height="2.200"/><rect x="527.300" y="625.600" width="2.200" height="2.200"/><rect x="521.500" y="628.900" width="2.200" height="2.200"/></g>
<!-- glue -->
<path d="M545.5 629.8L548.9 627.2L550.8 627.0L546.8 623.3L546.7 625.2L544.5 628.8z" fill="#c9c9c9" stroke="#4a4a4a" stroke-width=".7" stroke-linejoin="round"/>
<path d="M551.7 626.2L555.6 621.9L551.4 618.1L547.5 622.4z" fill="#8a4a16" stroke="#4a260a" stroke-width=".7" stroke-linejoin="round"/>
<path d="M549.1 623.3L552.6 619.5" stroke="#d9953a" stroke-width="1.500"/>
<path d="M550.8 627.0L551.7 626.2L547.5 622.4L546.8 623.3z" fill="#d8262c" stroke="#8a1015" stroke-width=".4"/>
<path d="M556.0 622.3L557.5 620.7L552.5 616.1L551.0 617.7z" fill="#e6b64a" stroke="#7a5a12" stroke-width=".7" stroke-linejoin="round"/>
<circle cx="544.400" cy="631.600" r="1.300" fill="#7aa6e6" stroke="#2f5fb0" stroke-width=".7"/>
<use href="#sep3" x="565"/>
<!-- fontwork -->
<path d="M578.500 620.500l3.300-3 3.300 3" fill="none" stroke="#6a5a4a" stroke-width=".9"/>
<rect x="575.500" y="620.500" width="12.500" height="10" rx="1" fill="#f4f4f4" stroke="#8a6852" stroke-width="1.800"/>
<text x="578.300" y="629" font-family="Liberation Sans,sans-serif" font-weight="bold" font-size="7.500" fill="#111">A</text>
<!-- picture -->
<rect x="599.500" y="617.500" width="14.500" height="14.500" fill="none" stroke="#111" stroke-width="1" stroke-dasharray="1.500 1.500"/>
<circle cx="609" cy="622.500" r="3.600" fill="#f8dc3a" stroke="#c9a30e" stroke-width=".6"/>
<rect x="601.200" y="621.800" width="6.500" height="6.200" fill="#e0202a"/>
<path d="M608 623l4.400 7.800h-8.800z" fill="#2b5fb8"/>
<!-- gallery -->
<rect x="624.500" y="617.500" width="10" height="10" rx="2" fill="#f2f2f2" stroke="#777"/>
<rect x="626.500" y="619.500" width="6" height="6" fill="#c9b9a0"/>
<rect x="629.500" y="621.500" width="10.500" height="10.500" rx="2" fill="#f2f2f2" stroke="#666"/>
<rect x="631.500" y="623.500" width="6.500" height="6.500" fill="#b5864a"/><path d="M631.500 630l2.500-3 1.500 1.500 2.500-2.500v4z" fill="#8aa050"/>
<use href="#sep3" x="648"/>
<!-- rotate -->
<path d="M656 625.500l7-6.500 7.500 6.500-7 6.800z" fill="url(#gg)" stroke="#555" stroke-linejoin="round"/>
<path d="M666.500 617.800c2.500-.3 4 1 4 3.500" fill="none" stroke="#111" stroke-width="1.200"/><path d="M668.700 620.800h3.600l-1.800 2.300z"/>
<use href="#dd3" x="679.500" y="623"/>
<!-- align -->
<rect x="693" y="618" width="2" height="13.500" fill="#111"/>
<rect x="696.500" y="619.500" width="11" height="4" fill="#9bb560" stroke="#5f7a2c"/>
<rect x="696.500" y="625.500" width="6" height="3.500" fill="#6f95c8" stroke="#3a5f96"/>
<use href="#dd3" x="715.500" y="623"/>
<!-- arrange -->
<rect x="733.500" y="617.500" width="10.500" height="10.500" fill="#e3e3e3" stroke="#b5b5b5"/>
<rect x="728.500" y="621.500" width="10.500" height="10.500" fill="#d9d9d9" stroke="#b0b0b0"/>
<rect x="731" y="620" width="10.500" height="10.500" fill="#9bb558" stroke="#5f7a2c"/>
<use href="#dd3" x="751.800" y="623"/>
<use href="#sep3" x="764"/>
<!-- extrusion -->
<path d="M777.500 618.500h8q2.500 0 2.500 2.500v7.500q0 2.500-2.500 2.500h-8q-2 0-2-2.500v-7.500q0-2.500 2-2.500z" fill="url(#gbl)" stroke="#1e2f44"/>
<path d="M772.500 626h3.500v-2l4 3.800-4 3.800v-2h-3.500z" fill="#a9cf6a" stroke="#33501a" stroke-width=".8" stroke-linejoin="round"/>
<rect x="800" y="613" width="9.500" height="25" fill="url(#gend)"/>
<path d="M802 631.500h6l-3 3z"/>
</svg>
<div class="a sf" style="left:7px;width:288px;border-right-width:2px"></div><div class="t st" style="left:12px">Фигура</div>
<div class="a sf" style="left:297px;width:218px;border-left:none"></div>
<svg class="a" style="left:304px;top:644px" width="17" height="13" viewBox="0 0 17 13" shape-rendering="crispEdges"><path d="M4.500 0v8M0 4.500h8" stroke="#1530d8" stroke-width="1"/><rect x="5.500" y="5.500" width="10" height="6" fill="none" stroke="#000" stroke-width="1" stroke-dasharray="1 1"/></svg>
<div class="t st" style="left:324.500px">1,50 / 2,50</div>
<svg class="a" style="left:412px;top:644px" width="16" height="13" viewBox="0 0 16 13" shape-rendering="crispEdges"><rect x="3.500" y="2.500" width="10" height="9" fill="none" stroke="#000" stroke-width="1" stroke-dasharray="1 1"/><path d="M5 0l2 2M7 0l-2 2M10 0l2 2M12 0l-2 2" stroke="#000" stroke-width=".8"/><path d="M0 5h2M0 8h2M0 11h2" stroke="#000" stroke-width="1" stroke-dasharray="1 1"/></svg>
<div class="t st" style="left:432.500px">8,00 x 8,00</div>
<div class="a sf" style="left:519px;width:45px"></div><div class="t st" style="left:527.500px">39%</div>
<div class="a sf" style="left:568px;width:23px"></div><div class="t st" style="left:575.500px">*</div>
<div class="a sf" style="left:595px;width:25px"></div>
<div class="a sf" style="left:624px;width:133px"></div><div class="a sf" style="left:761px;width:156px;border-left:none"></div>
<div class="t st" style="left:629px">Слайд 1 / 1 (Разметка)</div><div class="t st" style="left:783px">ычный</div>
<!--BOTE-->
<!--DESKS-->
<div class="a" style="left:925px;top:12px;width:1px;height:653px;background:#3f6f66"></div>
<div class="a" style="left:0;top:664px;width:926px;height:1px;background:#3f6f66"></div>
<div class="a" style="left:780px;top:665.500px;width:109px;height:3px;background:#1f5fa8"></div>
<div class="a" style="left:820px;top:665.500px;width:13px;height:3px;background:#e8eef5"></div>
<div class="a" style="left:835px;top:665.500px;width:2px;height:3px;background:#d9484c"></div>
<div class="a" style="left:926px;top:123px;width:8px;height:33px;background:linear-gradient(#4d9af0,#1f6fe0 40%,#3a8cf0 70%,#1c62d0)"></div>
<svg class="a" style="left:927px;top:100px" width="7" height="26" viewBox="0 0 7 26"><path d="M0 26l4.500-22" stroke="#9aa4b0" stroke-width="1"/><path d="M1 26l4.500-20h2v20z" fill="#fff"/></svg>
<div class="t" style="left:923px;top:160px;font-size:11px;line-height:14px;width:11px;overflow:hidden;clip-path:inset(0 0 0 4.500px)">hir</div>
<div class="a" style="left:926px;top:232px;width:8px;height:43px;background:#f4f4f6;border-top:1px solid #888;border-bottom:1px solid #888"></div>
<div class="a" style="left:927.500px;top:255px;width:7px;height:17px;background:#b9b4ee"></div>
<div class="a" style="left:930px;top:260px;width:4px;height:9px;background:#8a86d8"></div>
<div class="a" style="left:926px;top:352px;width:8px;height:43px;background:#f4f4f6;border-top:1px solid #888;border-bottom:1px solid #888"></div>
<div class="a" style="left:927.500px;top:375px;width:7px;height:17px;background:#b9b4ee"></div>
<div class="a" style="left:930px;top:380px;width:4px;height:9px;background:#8a86d8"></div>
<div class="t" style="left:927.500px;top:279px;font-size:11px;line-height:14px">rr</div>
<div class="t" style="left:930px;top:298px;font-size:11px;line-height:14px">с</div>
<div class="a" style="left:927.500px;top:400.500px;width:7px;height:0;border-top:1px dotted #e02030"></div>
<div class="t" style="left:925px;top:403px;font-size:11px;line-height:14px;clip-path:inset(0 0 0 2.500px)">го</div>
<div class="t" style="left:930px;top:419px;font-size:11px;line-height:14px">п</div>
<div class="t" style="left:924.500px;top:431px;font-size:11px;line-height:14px;clip-path:inset(0 0 0 3px)">ıу</div>
<div class="a" style="left:927.500px;top:443.500px;width:7px;height:0;border-top:1px dotted #e02030"></div>
<!--DESKE-->
</body>
</html>
